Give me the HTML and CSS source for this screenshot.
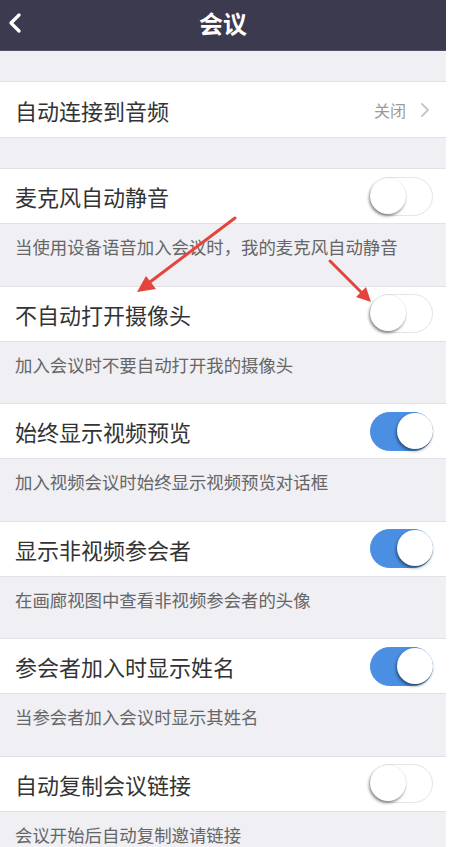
FILE: index.html
```html
<!DOCTYPE html>
<html lang="zh-CN">
<head>
<meta charset="utf-8">
<title>会议</title>
<link rel="stylesheet" href="styles.css">
</head>
<body>
<div class="screen">
  <header class="topbar">
    <svg class="back" width="14" height="20" viewBox="0 0 14 20"><polyline points="11,2 3,10 11,18" fill="none" stroke="#ffffff" stroke-width="3.2" stroke-linecap="round" stroke-linejoin="round"/></svg>
    <div class="title">会议</div>
  </header>

  <div class="gap"></div>
  <div class="row first">
    <span class="label">自动连接到音频</span>
    <span class="value">关闭
      <svg class="chev" width="10" height="16" viewBox="0 0 10 16"><polyline points="2,2 8,8 2,14" fill="none" stroke="#c7c7cc" stroke-width="2" stroke-linecap="round" stroke-linejoin="round"/></svg>
    </span>
  </div>
  <div class="gap"></div>

  <div class="row"><span class="label">麦克风自动静音</span><span class="toggle"><span class="knob"></span></span></div>
  <div class="desc">当使用设备语音加入会议时，我的麦克风自动静音</div>

  <div class="row"><span class="label">不自动打开摄像头</span><span class="toggle"><span class="knob"></span></span></div>
  <div class="desc">加入会议时不要自动打开我的摄像头</div>

  <div class="row"><span class="label">始终显示视频预览</span><span class="toggle on"><span class="knob"></span></span></div>
  <div class="desc">加入视频会议时始终显示视频预览对话框</div>

  <div class="row"><span class="label">显示非视频参会者</span><span class="toggle on"><span class="knob"></span></span></div>
  <div class="desc">在画廊视图中查看非视频参会者的头像</div>

  <div class="row"><span class="label">参会者加入时显示姓名</span><span class="toggle on"><span class="knob"></span></span></div>
  <div class="desc">当参会者加入会议时显示其姓名</div>

  <div class="row"><span class="label">自动复制会议链接</span><span class="toggle"><span class="knob"></span></span></div>
  <div class="desc last">会议开始后自动复制邀请链接</div>

  <svg class="arrows" width="446" height="847" viewBox="0 0 446 847">
    <line x1="235" y1="218" x2="150" y2="282" stroke="#e5443c" stroke-width="3" stroke-linecap="round"/>
    <polygon points="137,292 146,276 156,289" fill="#e5443c"/>
    <line x1="330" y1="261" x2="362" y2="293" stroke="#e5443c" stroke-width="3" stroke-linecap="round"/>
    <polygon points="371,302 356,297 366,287" fill="#e5443c"/>
  </svg>
</div>
</body>
</html>
```

FILE: styles.css
```css
html, body {
  margin: 0;
  padding: 0;
  background: #ffffff;
}
body {
  font-family: "Noto Sans CJK SC", "Noto Sans", sans-serif;
}
.screen {
  position: relative;
  width: 446px;
  height: 847px;
  overflow: hidden;
  background: #efeff4;
}
.topbar {
  height: 51px;
  background: #3c3a4e;
  border-bottom: 1px solid #55536a;
  box-sizing: border-box;
  display: flex;
  align-items: center;
  justify-content: center;
  position: relative;
}
.back {
  position: absolute;
  left: 8px;
  top: 13px;
}
.title {
  color: #ffffff;
  font-size: 24px;
  font-weight: 700;
  line-height: 30px;
  margin-top: -4px;
}
.gap {
  height: 30px;
}
.row {
  height: 56px;
  box-sizing: border-box;
  background: #ffffff;
  border-top: 1px solid #e2e2e6;
  border-bottom: 1px solid #e2e2e6;
  display: flex;
  align-items: center;
  justify-content: space-between;
  padding: 0 13px 0 15px;
}
.row.first {
  height: 57px;
  padding-right: 16px;
}
.label {
  font-size: 22px;
  color: #333333;
  line-height: 30px;
}
.value {
  display: flex;
  align-items: center;
  gap: 14px;
  font-size: 16px;
  color: #9a9a9a;
}
.chev {
  display: block;
}
.desc {
  height: 61.5px;
  box-sizing: border-box;
  padding: 12px 15px 0;
  font-size: 17.4px;
  line-height: 22px;
  color: #666666;
}
.toggle {
  width: 63px;
  height: 39px;
  box-sizing: border-box;
  border-radius: 20px;
  border: 1.5px solid #e4e4e4;
  background: #ffffff;
  position: relative;
  flex: none;
}
.knob {
  position: absolute;
  left: -1px;
  top: 0px;
  width: 36px;
  height: 36px;
  border-radius: 50%;
  background: #ffffff;
  box-shadow: -1px 2px 3px rgba(0, 0, 0, 0.45), 0 0 0 0.5px rgba(0, 0, 0, 0.08);
}
.toggle.on {
  background: #4a8fe2;
  border-color: #4a8fe2;
}
.toggle.on .knob {
  left: auto;
  right: -1px;
}
.arrows {
  position: absolute;
  left: 0;
  top: 0;
  pointer-events: none;
}
```
